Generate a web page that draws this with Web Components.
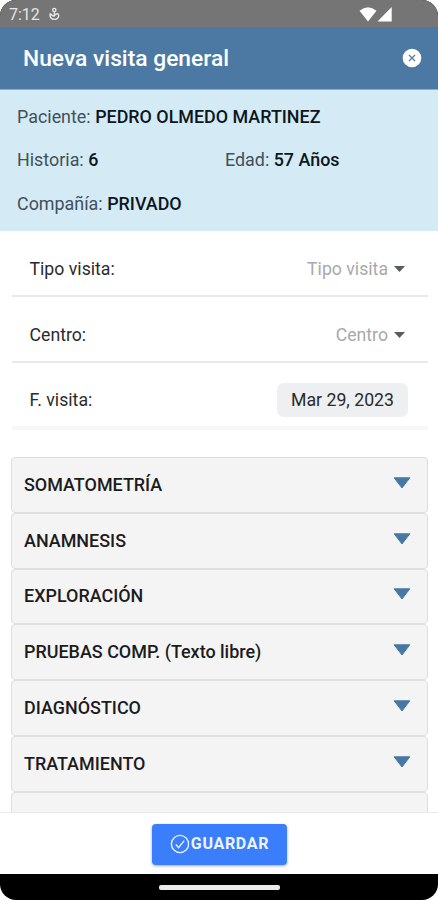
<!DOCTYPE html>
<html lang="es">
<head>
<meta charset="utf-8">
<meta name="viewport" content="width=device-width, initial-scale=1">
<title>Nueva visita general</title>
<style>
  html, body {
    margin: 0;
    height: 100%;
    background: #fff;
  }

  body {
    font-family: Roboto, "Liberation Sans", sans-serif;
    font-size: 17.7px;
    color: #2b2b2b;
    overflow: hidden;
  }
</style>
</head>
<body>
<visit-app>
  <status-bar slot="top">7:12</status-bar>
  <title-bar slot="top">Nueva visita general</title-bar>

  <patient-card>
    <patient-field label="Paciente:" wide>PEDRO OLMEDO MARTINEZ</patient-field>
    <patient-field label="Historia:">6</patient-field>
    <patient-field label="Edad:">57 Años</patient-field>
    <patient-field label="Compañía:" wide>PRIVADO</patient-field>
  </patient-card>

  <form-row label="Tipo visita:"><select-value>Tipo visita</select-value></form-row>
  <form-row label="Centro:"><select-value>Centro</select-value></form-row>
  <form-row label="F. visita:" last><date-chip>Mar 29, 2023</date-chip></form-row>

  <section-list>
    <section-item>SOMATOMETRÍA</section-item>
    <section-item>ANAMNESIS</section-item>
    <section-item>EXPLORACIÓN</section-item>
    <section-item>PRUEBAS COMP. (Texto libre)</section-item>
    <section-item>DIAGNÓSTICO</section-item>
    <section-item>TRATAMIENTO</section-item>
    <section-item></section-item>
  </section-list>

  <save-button slot="bottom">GUARDAR</save-button>
</visit-app>

<script>
class BaseElement extends HTMLElement {
  connectedCallback() {
    if(this.shadowRoot) return;
    this.attachShadow({ mode: 'open' }).innerHTML = this.template();
  }
}

class VisitApp extends BaseElement {
  template() {
    return `
      <style>
        :host {
          display: flex;
          flex-direction: column;
          width: 438px;
          height: 900px;
          background: #000;
          border-radius: 16px;
          overflow: hidden;
        }

        main {
          flex: 1;
          min-height: 0;
          overflow: hidden;
          background: #fff;
        }

        footer {
          box-sizing: border-box;
          height: 62px;
          flex-shrink: 0;
          display: flex;
          justify-content: center;
          align-items: flex-start;
          padding-top: 11px;
          background: #fff;
          border-top: 1px solid #eaeaea;
        }

        .gestures {
          height: 26px;
          flex-shrink: 0;
          display: flex;
          justify-content: center;
          align-items: center;
        }

        .gestures span {
          width: 121px;
          height: 5px;
          border-radius: 2px;
          background: #ebebeb;
        }
      </style>
      <slot name="top"></slot>
      <main><slot></slot></main>
      <footer><slot name="bottom"></slot></footer>
      <div class="gestures"><span></span></div>
    `;
  }
}

class StatusBar extends BaseElement {
  template() {
    return `
      <style>
        :host {
          box-sizing: border-box;
          display: flex;
          align-items: center;
          height: 27px;
          flex-shrink: 0;
          padding: 1px 46px 0 9px;
          background: #757575;
          color: #e6e6e6;
          font-size: 16px;
        }

        .app { margin-left: 9px; }
        .wifi { margin-left: auto; }
      </style>
      <slot></slot>
      <svg class="app" width="11" height="14" viewBox="0 0 11 14" fill="none" stroke="#e6e6e6" stroke-width="1.4">
        <circle cx="5.300" cy="3" r="1.600"/>
        <path d="M1.300 6.500C.2 10 2.500 12.400 5.300 12.400S10 10.500 9.600 8C9.200 6 6.900 6.300 5.300 9C4 9.200 2.400 8.200 1.300 6.500M5.300 4.600V9"/>
      </svg>
      <svg class="wifi" width="18" height="15" viewBox="0 0 18 15" fill="#fff">
        <path d="M.5 3.800Q9-3.200 17.500 3.800L9 14.500z"/>
      </svg>
      <svg width="15" height="15" viewBox="0 0 15 15" fill="#fff">
        <path d="M14.700 0v14.500H.5z"/>
      </svg>
    `;
  }
}

class TitleBar extends BaseElement {
  template() {
    return `
      <style>
        :host {
          box-sizing: border-box;
          display: flex;
          justify-content: space-between;
          align-items: center;
          height: 63px;
          flex-shrink: 0;
          padding: 0 16px 0 23px;
          background: #4c79a4;
          color: #fff;
          font-size: 22.8px;
          font-weight: 500;
          border-bottom: 1px solid #8daeca;
        }
      </style>
      <slot></slot>
      <svg width="20" height="20" viewBox="0 0 20 20">
        <circle cx="10" cy="10" r="9.300" fill="#fff"/>
        <path d="M7 7l6 6M13 7l-6 6" stroke="#4c79a4" stroke-width="1.200"/>
      </svg>
    `;
  }
}

class PatientCard extends BaseElement {
  template() {
    return `
      <style>
        :host {
          box-sizing: border-box;
          display: grid;
          grid-template-columns: 208px 1fr;
          grid-auto-rows: 43.500px;
          align-items: center;
          height: 141px;
          padding: 4.500px 17px;
          background: #d4eaf5;
          font-size: 17.9px;
        }
      </style>
      <slot></slot>
    `;
  }
}

class PatientField extends BaseElement {
  template() {
    return `
      <style>
        :host {
          display: block;
          white-space: nowrap;
          color: #41505a;
        }

        :host([wide]) { grid-column: 1 / -1; }

        b {
          font-weight: 500;
          color: #0d161c;
        }
      </style>
      ${this.getAttribute('label')} <b><slot></slot></b>
    `;
  }
}

class FormRow extends BaseElement {
  template() {
    return `
      <style>
        :host {
          box-sizing: border-box;
          display: flex;
          justify-content: space-between;
          align-items: center;
          height: 66px;
          margin: 0 10px 0 12px;
          padding: 11px 20px 0 17.500px;
          border-bottom: 2px solid #e9e9e9;
        }

        :host([last]) {
          padding-top: 11px;
          border-bottom: 4px solid #f7f7f7;
          height: 67px;
        }
      </style>
      <span>${this.getAttribute('label')}</span>
      <slot></slot>
    `;
  }
}

class SelectValue extends BaseElement {
  template() {
    return `
      <style>
        :host {
          display: flex;
          align-items: center;
          gap: 6px;
          padding-right: 3px;
          color: #a9a9a9;
        }
      </style>
      <slot></slot>
      <svg width="11" height="6" viewBox="0 0 11 6"><path d="M0 0h11L5.500 6z" fill="#5c5c5c"/></svg>
    `;
  }
}

class DateChip extends BaseElement {
  template() {
    return `
      <style>
        :host {
          box-sizing: border-box;
          display: flex;
          justify-content: center;
          align-items: center;
          width: 131px;
          height: 34px;
          border-radius: 7px;
          background: #edeff0;
        }
      </style>
      <slot></slot>
    `;
  }
}

class SectionList extends BaseElement {
  template() {
    return `
      <style>
        :host {
          display: flex;
          flex-direction: column;
          margin: 27px 10px 0 11px;
        }
      </style>
      <slot></slot>
    `;
  }
}

class SectionItem extends BaseElement {
  template() {
    return `
      <style>
        :host {
          box-sizing: border-box;
          display: flex;
          justify-content: space-between;
          align-items: center;
          height: 55.800px;
          flex-shrink: 0;
          padding: 0 16px 1px 12px;
          border: 1.500px solid #dedede;
          border-bottom-width: 1px;
          border-radius: 4px;
          background: #f4f4f4;
          color: #1c1c1c;
          font-size: 17.950px;
          font-weight: 500;
        }

        svg { margin: 0 0 3px auto; }
      </style>
      <slot></slot>
      <svg width="18" height="12" viewBox="0 0 18 12">
        <path d="M1.200.8h15.600L9 11z" fill="#4678a3" stroke="#4678a3" stroke-linejoin="round"/>
      </svg>
    `;
  }
}

class SaveButton extends BaseElement {
  template() {
    return `
      <style>
        :host { display: block; }

        button {
          display: flex;
          justify-content: center;
          align-items: center;
          gap: 1px;
          width: 135px;
          height: 41px;
          padding: 0 0 3px 1px;
          border: 0;
          border-radius: 4px;
          background: #3a7efb;
          box-shadow: 0 1px 3px rgba(0, 0, 0, 0.35);
          color: #eef4ff;
          font: 700 16px Roboto, "Liberation Sans", sans-serif;
          letter-spacing: 0.7px;
        }

        svg { margin-top: 2px; }
      </style>
      <button>
        <svg width="20" height="20" viewBox="0 0 20 20" fill="none" stroke="#e6efff" stroke-width="1.400">
          <circle cx="10" cy="10" r="8.600"/>
          <path d="M5.800 10.600l2.800 3 5.600-7"/>
        </svg>
        <slot></slot>
      </button>
    `;
  }
}

customElements.define('visit-app', VisitApp);
customElements.define('status-bar', StatusBar);
customElements.define('title-bar', TitleBar);
customElements.define('patient-card', PatientCard);
customElements.define('patient-field', PatientField);
customElements.define('form-row', FormRow);
customElements.define('select-value', SelectValue);
customElements.define('date-chip', DateChip);
customElements.define('section-list', SectionList);
customElements.define('section-item', SectionItem);
customElements.define('save-button', SaveButton);
</script>
</body>
</html>
